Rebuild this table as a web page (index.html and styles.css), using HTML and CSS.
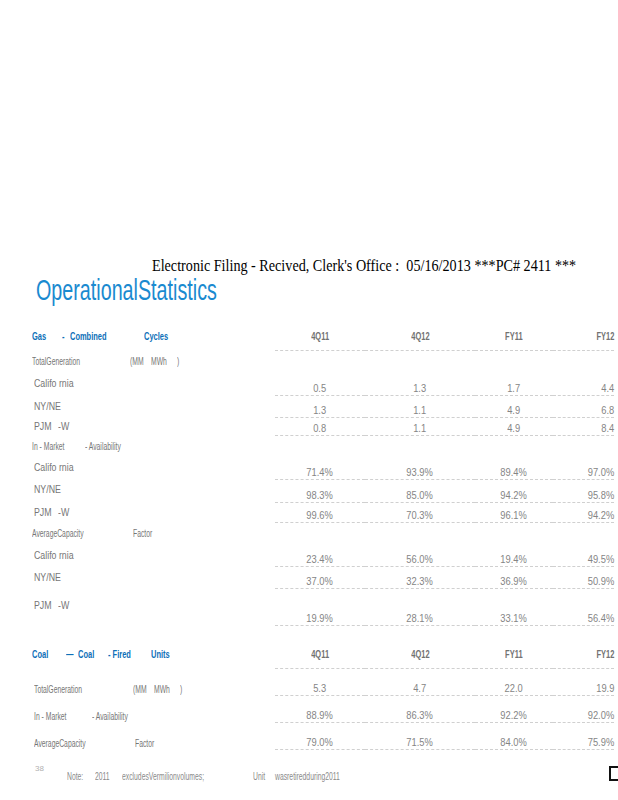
FILE: index.html
```html
<!DOCTYPE html>
<html>
<head>
<meta charset="utf-8">
<title>Operational Statistics</title>
<link rel="stylesheet" href="styles.css">
</head>
<body>
<div class="page">
  <div class="filing"><span class="filing-text">Electronic Filing - Recived, Clerk's Office :  05/16/2013 ***PC# 2411 ***</span></div>
  <h1 class="title"><span class="title-text">OperationalStatistics</span></h1>

  <section class="stats">
    <div class="row head">
      <div class="lbl sect"><span class="seg w30"><span class="sq">Gas</span></span><span class="seg w8"><span class="sq">-</span></span><span class="seg w74"><span class="sq">Combined</span></span><span class="seg"><span class="sq">Cycles</span></span></div>
      <div class="cell"><span class="h">4Q11</span></div>
      <div class="cell"><span class="h">4Q12</span></div>
      <div class="cell"><span class="h">FY11</span></div>
      <div class="cell c4"><span class="h">FY12</span></div>
    </div>

    <div class="sub h21"><span class="seg w98"><span class="sq">TotalGeneration</span></span><span class="seg w21"><span class="sq">(MM</span></span><span class="seg w26"><span class="sq">MWh</span></span><span class="seg"><span class="sq">)</span></span></div>

    <div class="row h24 pb6">
      <div class="lbl item"><span class="sq2">Califo rnia</span></div>
      <div class="cell"><span class="n">0.5</span></div>
      <div class="cell"><span class="n">1.3</span></div>
      <div class="cell"><span class="n">1.7</span></div>
      <div class="cell c4"><span class="n">4.4</span></div>
    </div>
    <div class="row h22 pb5">
      <div class="lbl item"><span class="sq2">NY/NE</span></div>
      <div class="cell"><span class="n">1.3</span></div>
      <div class="cell"><span class="n">1.1</span></div>
      <div class="cell"><span class="n">4.9</span></div>
      <div class="cell c4"><span class="n">6.8</span></div>
    </div>
    <div class="row h18 pb3">
      <div class="lbl item"><span class="seg w24"><span class="sq2">PJM</span></span><span class="sq2">-W</span></div>
      <div class="cell"><span class="n">0.8</span></div>
      <div class="cell"><span class="n">1.1</span></div>
      <div class="cell"><span class="n">4.9</span></div>
      <div class="cell c4"><span class="n">8.4</span></div>
    </div>

    <div class="sub h20"><span class="seg w53"><span class="sq">In - Market</span></span><span class="seg"><span class="sq">- Availability</span></span></div>

    <div class="row h24 pb6">
      <div class="lbl item"><span class="sq2">Califo rnia</span></div>
      <div class="cell"><span class="n">71.4%</span></div>
      <div class="cell"><span class="n">93.9%</span></div>
      <div class="cell"><span class="n">89.4%</span></div>
      <div class="cell c4"><span class="n">97.0%</span></div>
    </div>
    <div class="row h23 pb7">
      <div class="lbl item"><span class="sq2">NY/NE</span></div>
      <div class="cell"><span class="n">98.3%</span></div>
      <div class="cell"><span class="n">85.0%</span></div>
      <div class="cell"><span class="n">94.2%</span></div>
      <div class="cell c4"><span class="n">95.8%</span></div>
    </div>
    <div class="row h20 pb4">
      <div class="lbl item"><span class="seg w24"><span class="sq2">PJM</span></span><span class="sq2">-W</span></div>
      <div class="cell"><span class="n">99.6%</span></div>
      <div class="cell"><span class="n">70.3%</span></div>
      <div class="cell"><span class="n">96.1%</span></div>
      <div class="cell c4"><span class="n">94.2%</span></div>
    </div>

    <div class="sub h21"><span class="seg w101"><span class="sq">AverageCapacity</span></span><span class="seg"><span class="sq">Factor</span></span></div>

    <div class="row h23 pb5">
      <div class="lbl item"><span class="sq2">Califo rnia</span></div>
      <div class="cell"><span class="n">23.4%</span></div>
      <div class="cell"><span class="n">56.0%</span></div>
      <div class="cell"><span class="n">19.4%</span></div>
      <div class="cell c4"><span class="n">49.5%</span></div>
    </div>
    <div class="row h22 pb5">
      <div class="lbl item"><span class="sq2">NY/NE</span></div>
      <div class="cell"><span class="n">37.0%</span></div>
      <div class="cell"><span class="n">32.3%</span></div>
      <div class="cell"><span class="n">36.9%</span></div>
      <div class="cell c4"><span class="n">50.9%</span></div>
    </div>
    <div class="row h37 pb14">
      <div class="lbl item"><span class="seg w24"><span class="sq2">PJM</span></span><span class="sq2">-W</span></div>
      <div class="cell"><span class="n">19.9%</span></div>
      <div class="cell"><span class="n">28.1%</span></div>
      <div class="cell"><span class="n">33.1%</span></div>
      <div class="cell c4"><span class="n">56.4%</span></div>
    </div>

    <div class="row head coal">
      <div class="lbl sect"><span class="seg w34"><span class="sq">Coal</span></span><span class="seg w12"><span class="sq">—</span></span><span class="seg w30"><span class="sq">Coal</span></span><span class="seg w43"><span class="sq">- Fired</span></span><span class="seg"><span class="sq">Units</span></span></div>
      <div class="cell"><span class="h">4Q11</span></div>
      <div class="cell"><span class="h">4Q12</span></div>
      <div class="cell"><span class="h">FY11</span></div>
      <div class="cell c4"><span class="h">FY12</span></div>
    </div>
    <div class="row h27 pb0">
      <div class="lbl item"><span class="seg w99"><span class="sq">TotalGeneration</span></span><span class="seg w21"><span class="sq">(MM</span></span><span class="seg w26"><span class="sq">MWh</span></span><span class="seg"><span class="sq">)</span></span></div>
      <div class="cell"><span class="n">5.3</span></div>
      <div class="cell"><span class="n">4.7</span></div>
      <div class="cell"><span class="n">22.0</span></div>
      <div class="cell c4"><span class="n">19.9</span></div>
    </div>
    <div class="row h27 pb0">
      <div class="lbl item"><span class="seg w58"><span class="sq">In - Market</span></span><span class="seg"><span class="sq">- Availability</span></span></div>
      <div class="cell"><span class="n">88.9%</span></div>
      <div class="cell"><span class="n">86.3%</span></div>
      <div class="cell"><span class="n">92.2%</span></div>
      <div class="cell c4"><span class="n">92.0%</span></div>
    </div>
    <div class="row h27 pb0">
      <div class="lbl item"><span class="seg w101"><span class="sq">AverageCapacity</span></span><span class="seg"><span class="sq">Factor</span></span></div>
      <div class="cell"><span class="n">79.0%</span></div>
      <div class="cell"><span class="n">71.5%</span></div>
      <div class="cell"><span class="n">84.0%</span></div>
      <div class="cell c4"><span class="n">75.9%</span></div>
    </div>
  </section>

  <footer class="foot">
    <div class="foot-left">
      <div class="pg">38</div>
      <div class="note"><span class="seg w28"><span class="sq">Note:</span></span><span class="seg w27"><span class="sq">2011</span></span><span class="seg w131"><span class="sq">excludesVermilionvolumes;</span></span><span class="seg w22"><span class="sq">Unit</span></span><span class="seg"><span class="sq">wasretiredduring2011</span></span></div>
    </div>
    <div class="bracket"></div>
  </footer>
</div>
</body>
</html>
```

FILE: styles.css
```css
* { box-sizing: border-box; margin: 0; padding: 0; }

body {
  width: 618px;
  height: 800px;
  overflow: hidden;
  background: #ffffff;
  font-family: "Liberation Sans", Arial, sans-serif;
  color: #808080;
}

.page { padding-top: 257px; }

.filing {
  padding-left: 152px;
  font-family: "Liberation Serif", "Times New Roman", serif;
  font-size: 16px;
  line-height: 18px;
  color: #000000;
  white-space: pre;
}

.filing-text {
  display: inline-block;
  transform: scaleX(0.885);
  transform-origin: 0 50%;
}

.title {
  padding-left: 36px;
  font-size: 29px;
  line-height: 30px;
  font-weight: normal;
  color: #1a8ad0;
  white-space: nowrap;
}

.title-text {
  display: inline-block;
  transform: scaleX(0.68);
  transform-origin: 0 50%;
}

.stats { margin-top: 21px; }

.row {
  display: grid;
  grid-template-columns: 243px 90px 110px 78px 61px;
  padding-left: 32px;
}

.sub {
  display: flex;
  align-items: flex-start;
  padding-left: 32px;
  padding-top: 4px;
  font-size: 10px;
  line-height: 13px;
  color: #767676;
  white-space: nowrap;
}

.lbl {
  display: flex;
  align-items: flex-end;
  white-space: nowrap;
  font-size: 10px;
  line-height: 13px;
  color: #767676;
}

.lbl.item { padding-left: 2px; font-size: 11px; }

.cell {
  display: flex;
  align-items: flex-end;
  justify-content: center;
  border-bottom: 1px dashed #d0d0d0;
  font-size: 11px;
  line-height: 13px;
  white-space: nowrap;
  color: #858585;
}

.cell.c4 { justify-content: flex-end; }

.seg { display: inline-block; white-space: nowrap; }

.w8 { width: 8px; }
.w12 { width: 12px; }
.w21 { width: 21px; }
.w22 { width: 22px; }
.w24 { width: 24px; }
.w26 { width: 26px; }
.w27 { width: 27px; }
.w28 { width: 28px; }
.w30 { width: 30px; }
.w34 { width: 34px; }
.w43 { width: 43px; }
.w53 { width: 53px; }
.w58 { width: 58px; }
.w74 { width: 74px; }
.w98 { width: 98px; }
.w99 { width: 99px; }
.w101 { width: 101px; }
.w131 { width: 131px; }

.sq {
  display: inline-block;
  transform: scaleX(0.68);
  transform-origin: 0 50%;
}

.sq2 {
  display: inline-block;
  transform: scaleX(0.8);
  transform-origin: 0 50%;
}

.n {
  display: inline-block;
  transform: scaleX(0.85);
}

.c4 .n, .c4 .h { transform-origin: 100% 50%; }

.h {
  display: inline-block;
  font-weight: bold;
  color: #727272;
  transform: scaleX(0.68);
}

/* section header rows */
.row.head { height: 25px; }
.row.head .lbl,
.row.head .cell { align-items: flex-start; padding-top: 4px; }
.row.head.coal { margin-top: 18px; }

.sect {
  font-size: 11px;
  font-weight: bold;
  color: #0d6fb8;
}

/* row heights */
.h18 { height: 18px; }
.h20 { height: 20px; }
.h21 { height: 21px; }
.h22 { height: 22px; }
.h23 { height: 23px; }
.h24 { height: 24px; }
.h27 { height: 27px; }
.h37 { height: 37px; }

/* label lift inside data rows */
.pb0 .lbl { padding-bottom: 0; }
.pb3 .lbl { padding-bottom: 3px; }
.pb4 .lbl { padding-bottom: 4px; }
.pb5 .lbl { padding-bottom: 5px; }
.pb6 .lbl { padding-bottom: 6px; }
.pb7 .lbl { padding-bottom: 7px; }
.pb14 .lbl { padding-bottom: 14px; }

.pb0 .lbl.item { padding-left: 2px; font-size: 10px; }
.pb0 .cell { padding-bottom: 0; }

/* footer */
.foot {
  display: flex;
  align-items: flex-start;
  margin-top: 14px;
  padding-left: 35px;
}

.pg {
  font-size: 8px;
  line-height: 9px;
  color: #b0b0b0;
}

.note {
  display: flex;
  margin-top: -2px;
  padding-left: 32px;
  font-size: 10px;
  line-height: 12px;
  color: #8a8a8a;
  white-space: nowrap;
}

.bracket {
  margin-left: auto;
  margin-top: 2px;
  width: 9px;
  height: 15px;
  border: 2px solid #111111;
  border-right: none;
}
```
